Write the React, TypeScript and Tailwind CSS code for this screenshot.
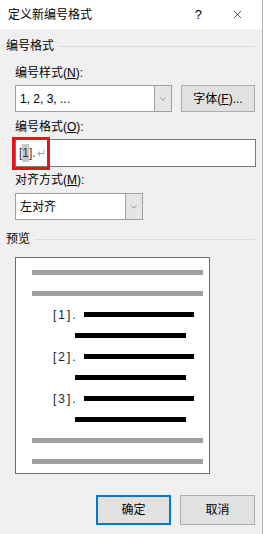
import { X, ChevronDown } from "lucide-react"

function Combo({ value, width }: { value: string; width: string }) {
  return (
    <div className={`flex h-[27px] ${width} border border-[#a0a0a0] bg-white`}>
      <div className="flex flex-1 items-center pl-[4px] text-[12px] text-black">{value}</div>
      <div className="flex w-[17px] items-center justify-center border-l border-[#a0a0a0] bg-[#e5e5e5]">
        <ChevronDown className="h-[10px] w-[10px] text-[#606060]" strokeWidth={1.5} />
      </div>
    </div>
  )
}

function Label({ text, k, className = "" }: { text: string; k: string; className?: string }) {
  return (
    <div className={`h-[16px] pl-[15px] text-[12px] leading-[16px] text-black ${className}`}>
      {text}(<span className="underline">{k}</span>):
    </div>
  )
}

function Section({ title, className = "" }: { title: string; className?: string }) {
  return (
    <div className={`flex h-[16px] items-center gap-[4px] pl-[6px] pr-[7px] ${className}`}>
      <span className="text-[12px] leading-[16px] text-black">{title}</span>
      <div className="h-px flex-1 bg-[#dcdcdc]" />
    </div>
  )
}

function Bar({ gray, short }: { gray?: boolean; short?: boolean }) {
  if (gray) return <div className="ml-[16px] h-[5px] w-[171px] bg-[#a0a0a0]" />
  return <div className={`${short ? "ml-[59px] w-[111px]" : "ml-[68px] w-[110px]"} h-[5px] bg-black`} />
}

function NumRow({ n }: { n: number }) {
  return (
    <div className="flex h-[5px] items-center">
      <span className="w-[68px] pl-[37px] text-[12px] leading-none tracking-[2px] text-[#222]">[{n}].</span>
      <div className="h-[5px] w-[110px] bg-black" />
    </div>
  )
}

export default function App() {
  return (
    <div className="flex h-[534px] w-[263px] flex-col border-r border-[#b4b4b4] bg-[#f0f0f0] font-['Liberation_Sans','Noto_Sans_CJK_SC',sans-serif]">
      {/* Title bar */}
      <div className="flex h-[29px] items-center bg-white">
        <span className="pl-[8px] text-[12px] text-black">定义新编号格式</span>
        <span className="ml-auto mr-[29px] text-[13px] text-black">?</span>
        <X className="mr-[18px] h-[13px] w-[13px] text-black" strokeWidth={1.2} />
      </div>

      <Section title="编号格式" className="mt-[9px]" />
      <Label text="编号样式" k="N" className="mt-[11px]" />
      <div className="mt-[4px] flex pl-[15px]">
        <Combo value="1, 2, 3, ..." width="w-[157px]" />
        <button className="ml-[9px] h-[27px] w-[74px] border border-[#adadad] bg-[#e1e1e1] text-[12px] text-black">
          字体(<span className="underline">F</span>)...
        </button>
      </div>

      <Label text="编号格式" k="O" className="mt-[7px]" />
      <div className="relative mt-[4px] ml-[15px] h-[28px] w-[241px] border border-[#7a7a7a] bg-white">
        <div className="flex h-full items-center pl-[3px] text-[12px] text-[#333]">
          [<span className="bg-[#c8c8c8]">1</span>].<span className="ml-[1px] text-[11px] text-[#a0a0a0]">↵</span>
        </div>
        <div className="absolute left-[-4px] top-[-3px] h-[33px] w-[38px] border-[3px] border-[#e3141b]" />
      </div>

      <Label text="对齐方式" k="M" className="mt-[5px]" />
      <div className="mt-[5px] pl-[15px]">
        <Combo value="左对齐" width="w-[128px]" />
      </div>

      <Section title="预览" className="mt-[11px]" />
      <div className="ml-[15px] mt-[10px] flex h-[217px] w-[195px] flex-col gap-[16px] border border-[#6d6d6d] bg-white pt-[12px]">
        <Bar gray />
        <Bar gray />
        <NumRow n={1} />
        <Bar short />
        <NumRow n={2} />
        <Bar short />
        <NumRow n={3} />
        <Bar short />
        <Bar gray />
        <Bar gray />
      </div>

      <div className="mt-[21px] flex justify-end gap-[9px] pr-[7px]">
        <button className="h-[30px] w-[75px] border-2 border-[#0078d7] bg-[#e1e1e1] text-[12px] text-black">确定</button>
        <button className="h-[30px] w-[75px] border border-[#adadad] bg-[#e1e1e1] text-[12px] text-black">取消</button>
      </div>
    </div>
  )
}
